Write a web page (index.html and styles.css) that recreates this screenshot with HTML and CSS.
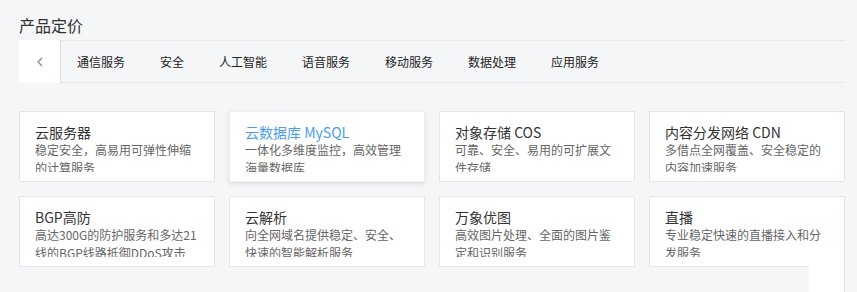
FILE: index.html
```html
<!DOCTYPE html>
<html lang="zh-CN">
<head>
    <meta charset="UTF-8">
    <title>产品定价</title>
    <link rel="stylesheet" href="styles.css">
</head>
<body>
    <div class="pricing">
        <h2 class="pricing-title">产品定价</h2>
        <div class="tab-bar">
            <button class="tab-prev" aria-label="上一页">
                <svg width="8" height="10" viewBox="0 0 8 10"><path d="M6 1 L2 5 L6 9" fill="none" stroke="#8a8a8a" stroke-width="1.2"/></svg>
            </button>
            <ul class="tabs">
                <li>通信服务</li>
                <li>安全</li>
                <li>人工智能</li>
                <li>语音服务</li>
                <li>移动服务</li>
                <li>数据处理</li>
                <li>应用服务</li>
            </ul>
        </div>
        <div class="product-grid">
            <div class="product-card">
                <div class="product-name">云服务器</div>
                <div class="product-desc">稳定安全，高易用可弹性伸缩的计算服务</div>
            </div>
            <div class="product-card active">
                <div class="product-name">云数据库 MySQL</div>
                <div class="product-desc">一体化多维度监控，高效管理海量数据库</div>
            </div>
            <div class="product-card">
                <div class="product-name">对象存储 COS</div>
                <div class="product-desc">可靠、安全、易用的可扩展文件存储</div>
            </div>
            <div class="product-card">
                <div class="product-name">内容分发网络 CDN</div>
                <div class="product-desc">多借点全网覆盖、安全稳定的内容加速服务</div>
            </div>
            <div class="product-card">
                <div class="product-name">BGP高防</div>
                <div class="product-desc">高达300G的防护服务和多达21线的BGP线路抵御DDoS攻击</div>
            </div>
            <div class="product-card">
                <div class="product-name">云解析</div>
                <div class="product-desc">向全网域名提供稳定、安全、快速的智能解析服务</div>
            </div>
            <div class="product-card">
                <div class="product-name">万象优图</div>
                <div class="product-desc">高效图片处理、全面的图片鉴定和识别服务</div>
            </div>
            <div class="product-card">
                <div class="product-name">直播</div>
                <div class="product-desc">专业稳定快速的直播接入和分发服务</div>
            </div>
        </div>
    </div>
    <div class="corner-patch"></div>
</body>
</html>
```

FILE: styles.css
```css
body {
    margin: 0;
    background-color: #f5f6f8;
    font-family: "Noto Sans CJK SC", "Liberation Sans", sans-serif;
    color: #333;
    position: relative;
    height: 292px;
    overflow: hidden;
}
.pricing {
    width: 826px;
    margin-left: 19px;
    padding-top: 13px;
}
.pricing-title {
    margin: 0 0 3px;
    font-size: 16px;
    line-height: 24px;
    font-weight: normal;
    color: #333;
}
.tab-bar {
    display: flex;
    height: 41px;
    border-top: 1px solid #e9eaec;
    border-bottom: 1px solid #e9eaec;
}
.tab-prev {
    width: 41px;
    margin: -1px 0;
    padding: 0;
    border: none;
    background-color: #fff;
    box-shadow: 1px 0 1px rgba(0,0,0,0.08);
    display: flex;
    align-items: center;
    justify-content: center;
    cursor: pointer;
}
.tabs {
    display: flex;
    margin: 0 0 0 -0.5px;
    padding: 0;
    list-style: none;
}
.tabs li {
    padding: 0 17.5px;
    font-size: 12px;
    line-height: 41px;
    color: #222;
    cursor: pointer;
}
.product-grid {
    display: grid;
    grid-template-columns: repeat(4, 196px);
    grid-auto-rows: 71px;
    gap: 14px;
    margin-top: 28px;
}
.product-card {
    box-sizing: border-box;
    background-color: #fff;
    border: 1px solid #e5e6e8;
    padding: 11px 15px 0;
}
.product-card.active {
    border-color: #eceef0;
    box-shadow: 0 2px 5px rgba(0,0,0,0.1);
}
.product-name {
    font-size: 14px;
    line-height: 18px;
    color: #333;
}
.product-card.active .product-name {
    color: #4a9df0;
}
.product-desc {
    font-size: 12px;
    line-height: 18px;
    max-height: 31px;
    overflow: hidden;
    color: #666;
}
.corner-patch {
    position: absolute;
    left: 806px;
    top: 266px;
    width: 38px;
    height: 26px;
    background: linear-gradient(to right, rgba(255,255,255,0), #fff 6px);
    border-right: 1px solid #e5e6e8;
}
```
